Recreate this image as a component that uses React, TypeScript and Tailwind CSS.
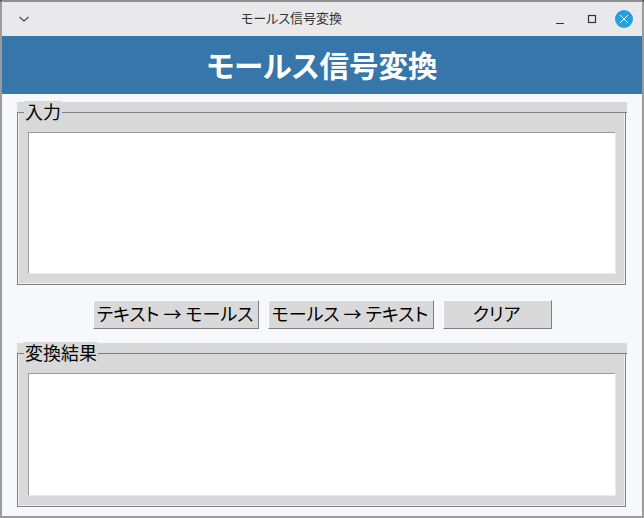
const font = { fontFamily: '"Noto Sans CJK JP", "Liberation Sans", sans-serif' }

// Classic tk-style labelled frame with the caption sitting on the top edge.
function Group({ label, height }: { label: string; height: string }) {
  return (
    <div className="relative mx-[15px]">
      <div className="h-[10px] bg-[#d9d9d9] border-b border-[#808080] box-content" />
      <div className={`${height} mr-px border border-t-0 border-[#808080] bg-[#d9d9d9] shadow-[inset_1px_0_0_#f0f0f0,inset_-1px_-1px_0_#f0f0f0] pt-[19px] px-[10px] pb-[11px]`}>
        <div className="h-full bg-white border-t border-l border-[#9a9a9a] shadow-[1px_1px_0_#ebebeb]" />
      </div>
      <span className="absolute left-[7px] -top-px bg-[#d9d9d9] px-px text-[18px] leading-[20px] text-black">{label}</span>
    </div>
  )
}

function Btn({ label, w }: { label: string; w: string }) {
  return (
    <button type="button" className={`${w} h-[29px] pb-[3px] pr-[2px] bg-[#d9d9d9] border border-t-white border-l-white border-r-[#7f7f7f] border-b-[#7f7f7f] text-[18px] leading-none text-black whitespace-nowrap [font-feature-settings:"palt"]`}>
      {label}
    </button>
  )
}

export default function App() {
  return (
    <div className="w-[644px] h-[518px] bg-[#333]">
      <div style={font} className="w-full h-full overflow-hidden bg-[#f7f8fc] border-2 border-[#9b9b9b] border-t-[#8f8f8f] rounded-t-[3px] flex flex-col">
        <div className="h-[34px] shrink-0 bg-[#e9e9eb] flex items-center relative">
          <svg width="12" height="12" viewBox="0 0 12 12" className="ml-[16px] text-[#444]" fill="none" stroke="currentColor" strokeWidth="1.2">
            <path d="M1.5 4l4.5 4 4.5-4" />
          </svg>
          <span className="flex-1 text-center text-[13px] leading-none pb-[4px] text-[#333] pr-[2px] [font-feature-settings:'palt']">モールス信号変換</span>
          <svg width="10" height="10" viewBox="0 0 10 10" className="mr-[22px] mt-[2px] text-[#333]" stroke="currentColor" fill="none" strokeWidth="1.2">
            <path d="M1 8.5h8" />
          </svg>
          <svg width="10" height="10" viewBox="0 0 10 10" className="mr-[18px] text-[#333]" stroke="currentColor" fill="none" strokeWidth="1.2">
            <rect x="1.5" y="1.5" width="7" height="7" />
          </svg>
          <div className="w-[18px] h-[18px] rounded-full bg-[#24a0e0] flex items-center justify-center mr-[9px]">
            <svg width="10" height="10" viewBox="0 0 10 10" stroke="white" fill="none" strokeWidth="1">
              <path d="M1 1l8 8M9 1l-8 8" />
            </svg>
          </div>
        </div>
        <div className="h-[58px] shrink-0 pb-[2px] bg-[#3776ab] flex items-center justify-center text-white font-bold text-[29.5px] [font-feature-settings:'palt']">
          モールス信号変換
        </div>
        <div className="pt-2">
          <Group label="入力" height="h-[172px]" />
          <div className="flex justify-center gap-[9px] pt-[15px] pb-[14px] pl-px">
            <Btn label="テキスト → モールス" w="w-[166px]" />
            <Btn label="モールス → テキスト" w="w-[166px]" />
            <Btn label="クリア" w="w-[109px]" />
          </div>
          <Group label="変換結果" height="h-[153px]" />
        </div>
      </div>
    </div>
  )
}
